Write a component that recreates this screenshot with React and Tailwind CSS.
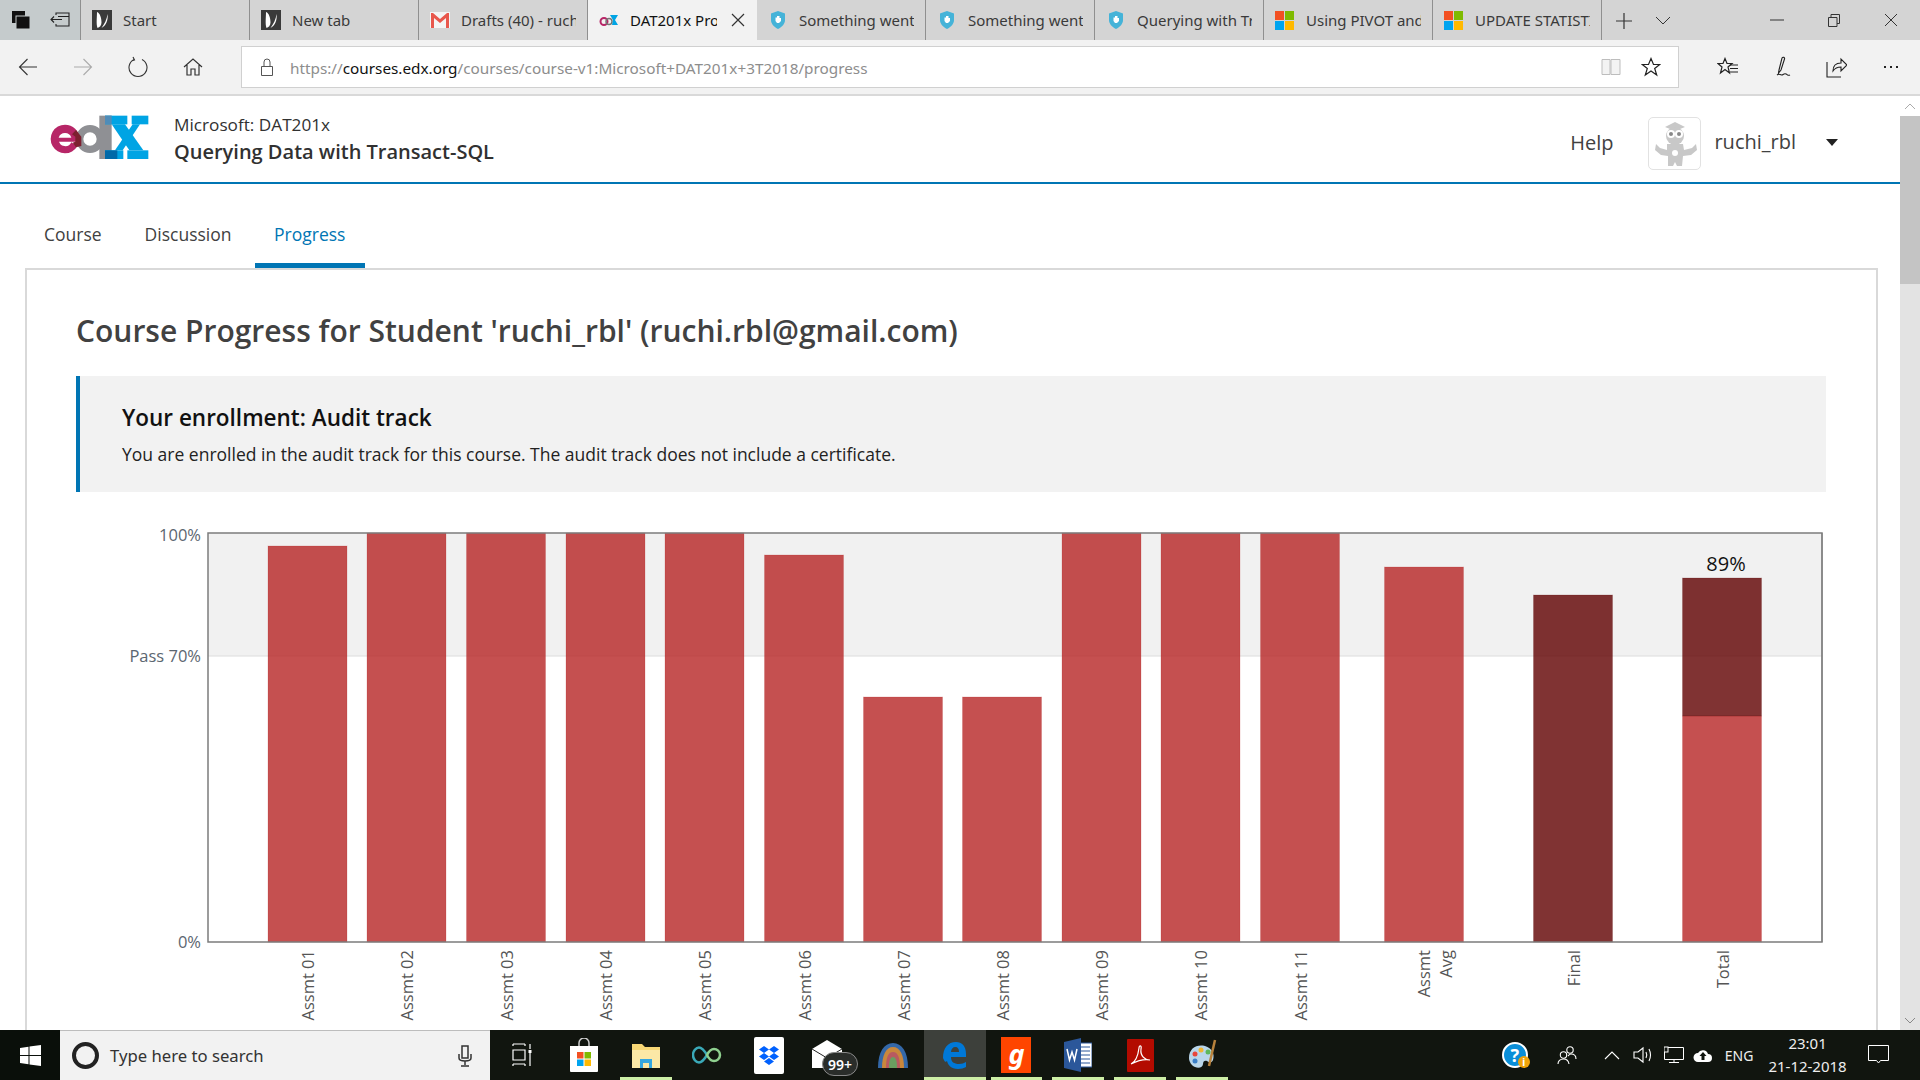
import React from "react";

const chromeFont = "font-['Noto_Sans',sans-serif]";

function Ico({ w = 20, h = 20, vb, children, className = "" }) {
  return (
    <svg width={w} height={h} viewBox={vb || `0 0 ${w} ${h}`} fill="none" className={"block shrink-0 " + className}>
      {children}
    </svg>
  );
}

const EdgeStart = () => (
  <Ico w={20} h={20}>
    <rect width="20" height="20" fill="#3a3a3a" />
    <path d="M5 2c3 1 4.500 6 4.500 10.500 0 3-2 5-4 5.500C4 14 5 7 5 2z" fill="#fff" />
    <path d="M15.500 4c-.5 5-3 10-6 14 4-2 7-7.500 6-14z" fill="#fff" />
  </Ico>
);
const Gmail = () => (
  <Ico w={20} h={16}>
    <rect width="20" height="16" fill="#f4f4f4" />
    <path d="M1 16V1h2l7 6 7-6h2v15h-3V6l-6 5-6-5v10z" fill="#e8574c" />
  </Ico>
);
const EdxSmall = () => (
  <Ico w={20} h={12}>
    <circle cx="5" cy="7.500" r="3.500" stroke="#b72667" strokeWidth="2" />
    <circle cx="10" cy="7.500" r="3" stroke="#777" strokeWidth="1.500" />
    <path d="M11 1h8l-3 5 3 5h-6l1-5z" fill="#00a4e4" />
  </Ico>
);
const Shield = () => (
  <Ico w={16} h={18}>
    <path d="M8 0l7 2.500V9c0 4-3 7-7 9-4-2-7-5-7-9V2.500z" fill="#45b3d8" />
    <path d="M5.500 10V6.500h1.500V5h2.500v2H11v3l-2 2H7z" fill="#fff" />
  </Ico>
);
const MsLogo = ({ s = 19 }) => (
  <Ico w={s} h={s} vb="0 0 19 19">
    <rect width="9" height="9" fill="#f25022" />
    <rect x="10" width="9" height="9" fill="#7fba00" />
    <rect y="10" width="9" height="9" fill="#00a4ef" />
    <rect x="10" y="10" width="9" height="9" fill="#ffb900" />
  </Ico>
);

function Tab({ icon, label, active, iconBox = "w-[38px] pl-[11px]" }) {
  return (
    <div className={"relative flex h-10 w-[169px] shrink-0 items-center border-r " + (active ? "border-transparent bg-[#f2f2f2]" : "border-[#8f8f8f]")}>
      <div className={"flex shrink-0 items-center " + iconBox}>{icon}</div>
      <div className={"overflow-hidden whitespace-nowrap text-[15px] text-[#3a3a3a] " + (active ? "ml-[4px] w-[87px] text-[#111]" : "ml-[4px] w-[115px]")}>{label}</div>
      {active && (
        <svg width="14" height="14" viewBox="0 0 14 14" className="ml-[14px] block shrink-0" fill="none">
          <path d="M1 1l12 12M13 1L1 13" stroke="#333" strokeWidth="1.200" />
        </svg>
      )}
    </div>
  );
}

function TabStrip() {
  return (
    <div className={"flex h-10 bg-[#d4d4d4] " + chromeFont}>
      <div className="flex h-10 w-[81px] shrink-0 items-center border-r border-[#8f8f8f] bg-[#c5cbcc] pl-[12px]">
        <Ico w={18} h={18}>
          <rect x="0" y="0" width="13" height="12" fill="#111" />
          <rect x="4" y="5" width="14" height="13" fill="#111" stroke="#c5cbcc" />
        </Ico>
        <Ico w={20} h={16} className="ml-[20px]">
          <path d="M6 3V1h13v13H6v-2M1 7.500h11M4 4.500L1 7.500l3 3M8 4.500h11" stroke="#222" strokeWidth="1.100" />
        </Ico>
      </div>
      <Tab icon={<EdgeStart />} label="Start" />
      <Tab icon={<EdgeStart />} label="New tab" />
      <Tab icon={<Gmail />} label="Drafts (40) - ruchi" />
      <Tab active icon={<EdxSmall />} label="DAT201x Progress" />
      <Tab icon={<Shield />} label="Something went wrong" iconBox="w-[38px] pl-[13px]" />
      <Tab icon={<Shield />} label="Something went wrong" iconBox="w-[38px] pl-[13px]" />
      <Tab icon={<Shield />} label="Querying with Transact" iconBox="w-[38px] pl-[13px]" />
      <Tab icon={<MsLogo />} label="Using PIVOT and UNPIVOT" iconBox="w-[38px] pl-[11px]" />
      <Tab icon={<MsLogo />} label="UPDATE STATISTICS" iconBox="w-[38px] pl-[11px]" />
      <Ico w={18} h={18} className="ml-[13px] mt-[12px]">
        <path d="M9 1v16M1 9h16" stroke="#333" strokeWidth="1.200" />
      </Ico>
      <Ico w={16} h={10} className="ml-[22px] mt-[16px]">
        <path d="M1 1l7 7 7-7" stroke="#333" strokeWidth="1" />
      </Ico>
      <Ico w={14} h={2} className="ml-[99px] mt-[19px]">
        <path d="M0 1h14" stroke="#333" />
      </Ico>
      <Ico w={12} h={13} className="ml-[44px] mt-[14px]">
        <path d="M.5 3.500h8.500v9H.500zM3 3.500v-3h8.500v9H9" stroke="#333" />
      </Ico>
      <Ico w={14} h={14} className="ml-[44px] mt-[13px]">
        <path d="M1 1l12 12M13 1L1 13" stroke="#333" />
      </Ico>
    </div>
  );
}

function Toolbar() {
  return (
    <div className={"flex h-[56px] items-center border-b-2 border-[#d9d9d9] bg-[#f2f2f2] " + chromeFont}>
      <Ico w={20} h={18} className="ml-[18px]">
        <path d="M19 9H1.500M9.500 1l-8 8 8 8" stroke="#333" strokeWidth="1.100" />
      </Ico>
      <Ico w={20} h={18} className="ml-[35px]">
        <path d="M1 9h17.500M10.500 1l8 8-8 8" stroke="#aaa" strokeWidth="1.100" />
      </Ico>
      <Ico w={20} h={22} className="ml-[35px]">
        <path d="M6 3.500a9 9 0 1 0 8 0M5 1l1.500 3L3.500 5" stroke="#333" strokeWidth="1.100" />
      </Ico>
      <Ico w={20} h={20} className="ml-[35px]">
        <path d="M1 10l9-8 9 8M4 8v10h4v-6h4v6h4V8" stroke="#333" strokeWidth="1.200" />
      </Ico>
      <div className="ml-[38px] flex h-[42px] w-[1438px] shrink-0 items-center border border-[#d0d0d0] bg-white">
        <Ico w={14} h={18} className="ml-[18px]">
          <path d="M1.500 8.500h11v9h-11zM4 8.500V4a3 3 0 0 1 6 0v4.500" stroke="#555" strokeWidth="1" />
        </Ico>
        <div className="ml-[16px] mt-[2px] w-[1000px] whitespace-nowrap text-[15.300px] text-[#8d8d8d]">
          https://<span className="text-[#111]">courses.edx.org</span>/courses/course-v1:Microsoft+DAT201x+3T2018/progress
        </div>
        <Ico w={20} h={20} className="ml-[311px]">
          <path d="M1 2.500h8v15H1zM10 2.500h9v15h-9z" stroke="#bdbdbd" fill="#f3f3f3" />
        </Ico>
        <Ico w={20} h={20} className="ml-[20px]">
          <path d="M10 1.500l2.500 6h6.200l-5 4 2 6.500-5.700-4-5.700 4 2-6.500-5-4h6.200z" stroke="#222" strokeWidth="1.200" />
        </Ico>
      </div>
      <Ico w={22} h={20} className="ml-[38px]">
        <path d="M8 1.500l2 5h5l-4 3.500 1.500 6L8 12.500l-4.500 3.500 1.500-6-4-3.500h5z" stroke="#222" strokeWidth="1.200" />
        <path d="M13 8h8M13 11.500h8M13 15h8" stroke="#222" />
      </Ico>
      <Ico w={22} h={22} className="ml-[32px]">
        <path d="M8 14L11 2c1-1.500 3-.500 2.500 1L10 14l-2.500 3zM6 19c2-2 4 0 5 0s2-2 4-1 2 2 4 1" stroke="#222" strokeWidth="1.100" />
      </Ico>
      <Ico w={22} h={22} className="ml-[32px]">
        <path d="M2 6v15h14M8 15c0-5 3-8 8-8V3l6 6-6 6v-4c-3 0-6 1-8 4z" stroke="#222" strokeWidth="1.100" />
      </Ico>
      <div className="ml-[37px] flex gap-[4px]">
        <div className="h-[2px] w-[2px] bg-[#222]" />
        <div className="h-[2px] w-[2px] bg-[#222]" />
        <div className="h-[2px] w-[2px] bg-[#222]" />
      </div>
    </div>
  );
}

const EdxLogo = () => (
  <svg width="120" height="65" viewBox="0 0 360 195" className="block shrink-0">
    <circle cx="150" cy="105" r="31" fill="none" stroke="#8f9094" strokeWidth="22" />
    <rect x="178" y="35" width="37" height="130" fill="#8f9094" />
    <path d="M75 62a43 43 0 0 1 43 43v8H52v-12h42a20 20 0 0 0-38 0v8a20 20 0 0 0 38 6l18 12a43 43 0 1 1-37-65z" fill="#b72667" />
    <path d="M108 78l16 20v28l-16 4-10-14 8-3v-15l-10-7z" fill="#7d2030" />
    <rect x="195" y="35" width="67" height="26" fill="#00a4e4" />
    <rect x="275" y="35" width="50" height="26" fill="#00a4e4" />
    <rect x="195" y="139" width="55" height="26" fill="#00a4e4" />
    <rect x="262" y="139" width="63" height="26" fill="#00a4e4" />
    <path d="M215 61h40l55 78h-42z" fill="#00a4e4" />
    <path d="M278 61h22l-52 78h-23z" fill="#00a4e4" />
    <rect x="195" y="35" width="20" height="26" fill="#4f8cb8" />
    <rect x="195" y="139" width="37" height="26" fill="#0069a8" />
  </svg>
);

const Avatar = () => (
  <div className="flex h-[53px] w-[53px] shrink-0 items-center justify-center rounded-[5px] border border-[#e2e2e2] bg-white">
    <svg width="46" height="46" viewBox="0 0 46 46" fill="#c8c8c8">
      <path d="M23 2l10 5-10 4-10-4z" />
      <circle cx="23" cy="16" r="9" />
      <circle cx="19" cy="14" r="4" fill="#fff" />
      <circle cx="27" cy="14" r="4" fill="#fff" />
      <circle cx="19" cy="14" r="2" fill="#888" />
      <circle cx="27" cy="14" r="2" fill="#888" />
      <path d="M15 24h16l1 6 8-2 4-4 1 6-6 5-8 1-1 10h-5l-2-4-2 4h-5v-10l-7-1-6-5 1-6 4 4 7 2z" />
      <circle cx="23" cy="33" r="3" fill="#fff" />
    </svg>
  </div>
);

function Header() {
  return (
    <div className="flex h-[88px] shrink-0 items-center border-b-2 border-[#0075b4] pb-[1px]">
      <div className="ml-[40px] mt-[-4px]">
        <EdxLogo />
      </div>
      <div className="ml-[14px] mt-[3px] flex flex-col text-[#313131]">
        <div className="text-[17.200px] leading-[24px]">Microsoft: DAT201x</div>
        <div className="text-[20px] font-semibold leading-[30px]">Querying Data with Transact-SQL</div>
      </div>
      <div className="ml-auto mt-[9px] text-[20px] text-[#414141]">Help</div>
      <div className="ml-[35px] mt-[9px]">
        <Avatar />
      </div>
      <div className="ml-[13px] mt-[7px] text-[20px] text-[#414141]">ruchi_rbl</div>
      <div className="ml-[30px] mr-[62px] mt-[7px] h-0 w-0 border-x-[6px] border-t-[7px] border-x-transparent border-t-[#222]" />
    </div>
  );
}

function Nav() {
  return (
    <div className="flex h-[84px] shrink-0 items-end pl-[25px] text-[17.500px]">
      <div className="flex h-[54px] items-start px-[19px] pt-[7px] text-[#414141]">Course</div>
      <div className="flex h-[54px] items-start pl-[24px] pr-[23px] pt-[7px] text-[#414141]">Discussion</div>
      <div className="flex h-[54px] items-start border-b-[5px] border-[#0075b4] px-[19.500px] pt-[7px] text-[#0075b4]">Progress</div>
    </div>
  );
}

const bars = [
  { x: 268, top: 546, label: "Assmt 01" },
  { x: 367, top: 533, label: "Assmt 02" },
  { x: 466.500, top: 533, label: "Assmt 03" },
  { x: 566, top: 533, label: "Assmt 04" },
  { x: 665, top: 533, label: "Assmt 05" },
  { x: 764.500, top: 555, label: "Assmt 06" },
  { x: 863.500, top: 697, label: "Assmt 07" },
  { x: 962.500, top: 697, label: "Assmt 08" },
  { x: 1062, top: 533, label: "Assmt 09" },
  { x: 1161, top: 533, label: "Assmt 10" },
  { x: 1260.500, top: 533, label: "Assmt 11" },
  { x: 1384.500, top: 567, label: "" },
];

function Bar({ x, top, bottom = 942, dark }) {
  return (
    <rect
      x={x}
      y={top}
      width={79}
      height={bottom - top}
      fill={dark ? "#600000" : "#b62424"}
      fillOpacity="0.8"
      stroke={dark ? "#600000" : "#b62424"}
      strokeOpacity="0.2"
      strokeWidth="1"
    />
  );
}

function Chart() {
  const axis = "fill-[#5b6670] text-[16.500px]";
  const xl = "fill-[#555] text-[16.500px]";
  return (
    <svg width="1750" height="540" viewBox="76 492 1750 540" className="mt-0 block">
      <rect x="208" y="533" width="1614" height="123" fill="#f1f1f1" />
      <path d="M208 656h1614" stroke="#dcdcdc" strokeWidth="1" />
      {bars.map((b) => (
        <Bar key={b.x} x={b.x} top={b.top} />
      ))}
      <Bar x={1533.500} top={595} dark />
      <Bar x={1682.500} top={716} />
      <Bar x={1682.500} top={578} bottom={716} dark />
      <path d="M208 533h1614v409H208z" stroke="#7c7c7c" strokeWidth="1.500" fill="none" />
      <path d="M1822 533v409" stroke="#7c7c7c" strokeWidth="1" />
      <text x="201" y="541" textAnchor="end" className={axis}>100%</text>
      <text x="201" y="662" textAnchor="end" className={axis}>Pass 70%</text>
      <text x="201" y="948" textAnchor="end" className={axis}>0%</text>
      {bars.filter((b) => b.label).map((b) => (
        <text key={b.label} transform={`translate(${b.x + 46} 950) rotate(-90)`} textAnchor="end" className={xl}>
          {b.label}
        </text>
      ))}
      <text transform="translate(1430 950) rotate(-90)" textAnchor="end" className={xl}>Assmt</text>
      <text transform="translate(1452 950) rotate(-90)" textAnchor="end" className={xl}>Avg</text>
      <text transform="translate(1580 950) rotate(-90)" textAnchor="end" className={xl}>Final</text>
      <text transform="translate(1729 950) rotate(-90)" textAnchor="end" className={xl}>Total</text>
      <text x="1726" y="571" textAnchor="middle" className="fill-[#111] text-[20px]">89%</text>
    </svg>
  );
}

function Card() {
  return (
    <div className="ml-[25px] mr-[22px] min-h-0 flex-1 overflow-hidden border-x-2 border-t-2 border-[#d9d9d9] pl-[49px] pr-[50px]">
      <h1 className="mt-[41px] text-[30px] font-semibold leading-[40px] text-[#414141]">
        Course Progress for Student 'ruchi_rbl' (ruchi.rbl@gmail.com)
      </h1>
      <div className="mt-[25px] h-[116px] border-l-4 border-[#0075b4] bg-[#f2f2f2] pl-[42px] pt-[26px]">
        <div className="text-[22.500px] font-semibold leading-[32px] text-[#111]">Your enrollment: Audit track</div>
        <div className="mt-[7px] text-[17.500px] leading-[26px] text-[#222]">
          You are enrolled in the audit track for this course. The audit track does not include a certificate.
        </div>
      </div>
      <Chart />
    </div>
  );
}

function Scrollbar() {
  return (
    <div className="flex w-5 shrink-0 flex-col bg-[#f0f0f0]">
      <div className="flex h-5 items-center justify-center bg-white">
        <Ico w={12} h={7}>
          <path d="M1 6l5-5 5 5" stroke="#aaa" />
        </Ico>
      </div>
      <div className="h-[168px] bg-[#c4c4c4]" />
      <div className="flex-1 bg-[#e3e3e3]" />
      <div className="flex h-5 items-center justify-center bg-[#e3e3e3]">
        <Ico w={12} h={7}>
          <path d="M1 1l5 5 5-5" stroke="#888" />
        </Ico>
      </div>
    </div>
  );
}

function Cell({ children, w = "w-[61.800px]", on, bg }) {
  return (
    <div className={"relative flex h-[50px] shrink-0 items-center justify-center " + w + (bg ? " bg-[#3d403b]" : "")}>
      {children}
      {on && <div className="absolute bottom-0 left-[5px] right-[5px] h-[3px] bg-[#cdeea6]" />}
      {bg && <div className="absolute bottom-0 left-0 right-0 h-[3px] bg-[#cdeea6]" />}
    </div>
  );
}

function Taskbar() {
  return (
    <div className={"flex h-[50px] shrink-0 items-center bg-[#11150f] " + chromeFont}>
      <div className="flex h-[50px] w-[60px] shrink-0 items-center justify-center bg-[#0a0f0a]">
        <Ico w={21} h={21}>
          <path d="M0 3l8.500-1.200V10H0zM9.500 1.600L21 0v10H9.500zM0 11h8.500v8.200L0 18zM9.500 11H21v10l-11.500-1.600z" fill="#fff" />
        </Ico>
      </div>
      <div className="flex h-[50px] w-[430px] shrink-0 items-center border-t border-[#bdbdbd] bg-[#f2f2f2]">
        <div className="ml-[12px] h-[27px] w-[27px] shrink-0 rounded-full border-[4px] border-[#222]" />
        <div className="ml-[11px] w-[340px] text-[16.700px] text-[#333]">Type here to search</div>
        <Ico w={14} h={22} className="ml-[8px]">
          <path d="M4 1h6v12H4z" fill="none" stroke="#333" strokeWidth="1.500" />
          <path d="M1 9v4c0 2 2 3 6 3s6-1 6-3V9M7 16v4M3 21h8" stroke="#333" strokeWidth="1.500" />
        </Ico>
      </div>
      <div className="flex h-[50px] w-[63px] shrink-0 items-center justify-center">
        <Ico w={20} h={24}>
          <path d="M1 1h12M1 1v2M13 1v2M1 7h12v10H1zM1 21h12M1 21v2M13 21v2M18 1v5M18 10v13" stroke="#fff" strokeWidth="1.200" />
          <rect x="16.500" y="7" width="3" height="3" fill="#fff" />
        </Ico>
      </div>
      <Cell>
        <Ico w={30} h={34}>
          <path d="M10 8V5a5 5 0 0 1 10 0v3" stroke="#ccc" strokeWidth="1.500" />
          <path d="M1 8h28v25a1 1 0 0 1-1 1H2a1 1 0 0 1-1-1z" fill="#fff" />
          <rect x="8" y="14" width="6.500" height="6.500" fill="#f25022" />
          <rect x="15.500" y="14" width="6.500" height="6.500" fill="#7fba00" />
          <rect x="8" y="21.500" width="6.500" height="6.500" fill="#00a4ef" />
          <rect x="15.500" y="21.500" width="6.500" height="6.500" fill="#ffb900" />
        </Ico>
      </Cell>
      <Cell on>
        <Ico w={30} h={28}>
          <path d="M1 3h10l3 3h15v21H1z" fill="#f8d775" />
          <path d="M1 9h28v18H1z" fill="#fbe8a6" />
          <path d="M9 27v-9h12v9h-3v-5h-6v5z" fill="#35a7e0" />
        </Ico>
      </Cell>
      <Cell>
        <Ico w={30} h={18}>
          <path d="M15 9c-3-5-5-7.500-8-7.500S1 5 1 9s3 7.500 6 7.500S12 14 15 9z" stroke="#3aa9b8" strokeWidth="2.500" />
          <path d="M15 9c2 4 4 6 7 6s6-2.500 6-6-3-6-6-6-5 2-7 6z" stroke="#8fd08f" strokeWidth="2.500" />
        </Ico>
      </Cell>
      <Cell>
        <div className="flex h-[37px] w-[30px] items-center justify-center rounded-[2px] bg-white">
          <Ico w={20} h={20}>
            <path d="M5 1l5 3.500-5 3.500-5-3.500zM15 1l5 3.500-5 3.500-5-3.500zM5 8l5 3.500-5 3.500-5-3.500zM15 8l5 3.500-5 3.500-5-3.500zM10 13l5 3.500-5 3.500-5-3.500z" fill="#0061fe" />
          </Ico>
        </div>
      </Cell>
      <Cell>
        <div className="relative h-[36px] w-[40px]">
          <Ico w={30} h={30} className="absolute left-[1px] top-[2px]">
            <path d="M0 10L15 1l15 9v19H0z" fill="#fff" />
            <path d="M0 10l15 9 15-9" stroke="#222" strokeWidth="1" />
          </Ico>
          <div className="absolute left-[11px] top-[15px] flex h-[24px] w-[36px] items-center justify-center rounded-full border border-[#888] bg-[#2a2d2a] text-[14px] font-semibold text-white">
            99+
          </div>
        </div>
      </Cell>
      <Cell>
        <Ico w={30} h={26}>
          <path d="M0 26C0 10 6 1 15 1s15 9 15 25z" fill="#3468a8" />
          <path d="M4 26C4 13 8 5 15 5s11 8 11 21z" fill="#c8873c" />
          <path d="M8 26C8 16 10 10 15 10s7 6 7 16z" fill="#b85a60" />
          <path d="M11 26c0-7 1-11 4-11s4 4 4 11z" fill="#6a9e60" />
        </Ico>
      </Cell>
      <Cell bg>
        <Ico w={25} h={28}>
          <path d="M1 17C1 7 6 1 14 1c6 0 10 4 10 12v3H9c0 5 3 7 8 7 3 0 5-1 7-2v5c-2 1-5 2-8 2-7 0-10-4-11-8-1 1-2 2-4-3zm8-6h8c0-3-1-5-4-5-2 0-4 2-4 5z" fill="#0078d7" />
        </Ico>
      </Cell>
      <Cell on>
        <div className="flex h-[36px] w-[30px] items-center justify-center bg-[#ff4500] pb-[3px] text-[27px] font-bold italic leading-none text-white">g</div>
      </Cell>
      <Cell on>
        <Ico w={28} h={34}>
          <rect x="13" y="5" width="15" height="24" fill="#fff" stroke="#2b579a" />
          <path d="M15 9h11M15 13h11M15 17h11M15 21h11M15 25h11" stroke="#2b579a" />
          <path d="M0 4l17-4v34L0 30z" fill="#2b579a" />
          <path d="M3 11l2.500 11 2.500-8 2.500 8L13 11" stroke="#fff" strokeWidth="1.500" />
        </Ico>
      </Cell>
      <Cell on>
        <Ico w={27} h={33}>
          <rect width="27" height="33" rx="1" fill="#b30b00" />
          <path d="M4 25c4-2 7-8 8-16 0-3 3-3 2 1-1 7 4 11 9 11-5-1-13 1-19 4z" stroke="#fff" strokeWidth="1.200" />
        </Ico>
      </Cell>
      <Cell on>
        <Ico w={30} h={34}>
          <path d="M2 20C2 10 10 6 18 8c7 2 10 8 8 14-1 3-4 3-6 1-2-1-4 0-4 3 0 3-4 5-8 3-3-1-6-5-6-9z" fill="#b9d6ea" />
          <circle cx="8" cy="16" r="2.500" fill="#e8463c" />
          <circle cx="14" cy="12" r="2.500" fill="#f2b632" />
          <circle cx="21" cy="14" r="2.500" fill="#5cb85c" />
          <circle cx="8" cy="23" r="2.500" fill="#3a7fc8" />
          <path d="M28 2l-6 26" stroke="#b8823c" strokeWidth="2.500" />
        </Ico>
      </Cell>
      <div className="ml-[269px] flex h-[50px] items-center">
        <div className="relative h-[26px] w-[26px]">
          <div className="flex h-[26px] w-[26px] items-center justify-center rounded-full border-2 border-white bg-[#0a8ed8] text-[18px] font-bold leading-none text-white">?</div>
          <div className="absolute left-[16px] top-[14px] flex h-[12px] w-[12px] items-center justify-center rounded-full bg-[#f0a30a] text-[10px] font-bold leading-none text-white">i</div>
        </div>
        <Ico w={20} h={20} className="ml-[29px]">
          <circle cx="13" cy="5" r="3.200" stroke="#fff" strokeWidth="1.100" />
          <circle cx="6.500" cy="10" r="3.200" stroke="#fff" strokeWidth="1.100" />
          <path d="M1 19c0-3 2-5 5.500-5s5 2 5.500 5M11 11c1-1 1.500-2 3-2 3 0 5 2 5 5" stroke="#fff" strokeWidth="1.100" />
        </Ico>
        <Ico w={16} h={9} className="ml-[27px]">
          <path d="M1 8l7-7 7 7" stroke="#fff" strokeWidth="1.100" />
        </Ico>
        <Ico w={20} h={20} className="ml-[13px]">
          <path d="M1 7h4l5-4v14l-5-4H1zM13 7c1 2 1 4 0 6M16 4c2 4 2 8 0 12" stroke="#fff" strokeWidth="1.100" />
        </Ico>
        <Ico w={20} h={18} className="ml-[11px]">
          <path d="M.5 1.500h19v12H.500zM10 13.500v3M5 16.500h10" stroke="#fff" />
          <rect x="0" y="1" width="4" height="5" fill="#11150f" stroke="#fff" />
        </Ico>
        <Ico w={20} h={14} className="ml-[9px]">
          <path d="M5 14a4.500 4.500 0 0 1 0-9 5.500 5.500 0 0 1 10 1 4 4 0 0 1 0 8z" fill="#fff" />
          <path d="M10 4l-3.500 4h2v4h3V8h2z" fill="#11150f" />
        </Ico>
        <div className="ml-[12px] text-[14px] text-[#eee]">ENG</div>
        <div className="ml-[15px] flex flex-col items-center text-[15px] leading-[23px] text-[#eee]">
          <div>23:01</div>
          <div>21-12-2018</div>
        </div>
        <Ico w={21} h={20} className="ml-[21px]">
          <path d="M.5.500h20v15h-8l-2 2.500-2-2.500h-8z" stroke="#fff" />
        </Ico>
      </div>
    </div>
  );
}

export default function App() {
  return (
    <div className="flex h-[1080px] w-[1920px] flex-col overflow-hidden bg-white font-['Open_Sans',sans-serif]">
      <TabStrip />
      <Toolbar />
      <div className="flex min-h-0 flex-1">
        <div className="flex min-w-0 flex-1 flex-col overflow-hidden">
          <Header />
          <Nav />
          <Card />
        </div>
        <Scrollbar />
      </div>
      <Taskbar />
    </div>
  );
}
